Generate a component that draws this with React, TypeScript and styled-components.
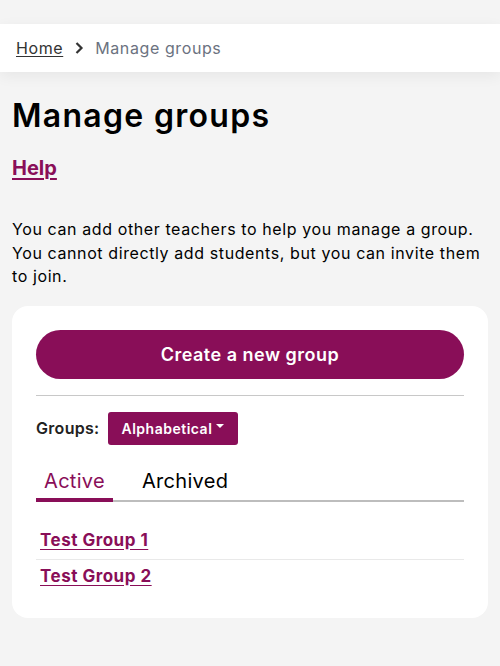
import React from "react";
import styled, { createGlobalStyle } from "styled-components";

const purple = "#890e58";

const Global = createGlobalStyle`
  html, body { margin: 0; padding: 0; background: #f4f4f4; }
  body { font-family: Inter, "Open Sans", sans-serif; color: #000; }
  * { box-sizing: border-box; }
`;

const Page = styled.div`
  padding-top: 24px;
  min-height: 666px;
`;

const Breadcrumb = styled.nav`
  height: 48px;
  background: #fff;
  box-shadow: 0 4px 14px rgba(0, 0, 0, 0.06);
  display: flex;
  align-items: center;
  gap: 10px;
  padding: 0 16px;
  font-size: 16px;
  letter-spacing: 0.6px;
`;

const CrumbLink = styled.a`
  color: #333;
  text-decoration: underline;
  text-underline-offset: 2px;
`;

const CrumbCurrent = styled.span`
  color: #6b7280;
`;

const Main = styled.main`
  padding: 0 12px;
`;

const Title = styled.h1`
  margin: 24px 0 0;
  font-size: 32px;
  font-weight: 600;
  letter-spacing: 1.3px;
  line-height: 40px;
`;

const HelpLink = styled.a`
  display: inline-block;
  margin-top: 16px;
  font-size: 20px;
  font-weight: 700;
  color: ${purple};
  text-decoration: underline;
  text-underline-offset: 3px;
  line-height: 32px;
`;

const Intro = styled.p`
  margin: 34px 0 0;
  font-size: 16px;
  line-height: 23.5px;
  letter-spacing: 0.6px;
`;

const Card = styled.section`
  margin-top: 17px;
  background: #fff;
  border-radius: 16px;
  padding: 24px 24px 23px;
`;

const PrimaryButton = styled.button`
  width: 100%;
  height: 49px;
  border: none;
  border-radius: 25px;
  background: ${purple};
  color: #fff;
  font: inherit;
  font-size: 18px;
  font-weight: 600;
  letter-spacing: 0.5px;
  cursor: pointer;
`;

const Rule = styled.hr`
  border: none;
  border-top: 1px solid #c8c8c8;
  margin: 16px 0 16px;
`;

const SortRow = styled.div`
  display: flex;
  align-items: center;
  gap: 8px;
`;

const SortLabel = styled.span`
  font-size: 16px;
  font-weight: 600;
  letter-spacing: 0.3px;
  color: #222;
`;

const Dropdown = styled.button`
  height: 33px;
  padding: 0 14px;
  border: none;
  border-radius: 3px;
  background: ${purple};
  color: #fff;
  font: inherit;
  font-size: 14px;
  font-weight: 600;
  letter-spacing: 0.5px;
  display: flex;
  align-items: center;
  gap: 4px;
`;

const Caret = styled.span`
  width: 0;
  height: 0;
  border-left: 4px solid transparent;
  border-right: 4px solid transparent;
  border-top: 4px solid #fff;
  margin-top: -4px;
`;

const Tabs = styled.div`
  display: flex;
  margin-top: 23px;
  border-bottom: 2px solid #bdbdbd;
`;

const Tab = styled.button<{ $active?: boolean }>`
  border: none;
  background: none;
  font: inherit;
  font-size: 20px;
  letter-spacing: 0.3px;
  padding: 0 8px 4px;
  width: ${(p) => (p.$active ? "77px" : "auto")};
  margin-left: ${(p) => (p.$active ? "0" : "21px")};
  margin-bottom: -2px;
  color: ${(p) => (p.$active ? purple : "#000")};
  border-bottom: 4px solid ${(p) => (p.$active ? purple : "transparent")};
  line-height: 26px;
`;

const GroupList = styled.ul`
  list-style: none;
  margin: 22px 0 0;
  padding: 0;
`;

const GroupItem = styled.li`
  padding: 4px 4px 6px;
  & + & {
    border-top: 1px solid #e9e9e9;
  }
`;

const GroupLink = styled.a`
  font-size: 17px;
  font-weight: 700;
  letter-spacing: 0.5px;
  color: ${purple};
  text-decoration: underline;
  text-underline-offset: 3px;
  line-height: 25px;
`;

const Chevron = () => (
  <svg width="12" height="14" viewBox="0 0 12 14" aria-hidden>
    <path d="M3.5 2 L8.5 7 L3.5 12" fill="none" stroke="#333" strokeWidth="2.2" />
  </svg>
);

export default function App() {
  return (
    <>
      <Global />
      <Page>
        <Breadcrumb>
          <CrumbLink href="#">Home</CrumbLink>
          <Chevron />
          <CrumbCurrent>Manage groups</CrumbCurrent>
        </Breadcrumb>
        <Main>
          <Title>Manage groups</Title>
          <HelpLink href="#">Help</HelpLink>
          <Intro>
            You can add other teachers to help you manage a group. You cannot directly add students, but you can
            invite them to join.
          </Intro>
          <Card>
            <PrimaryButton>Create a new group</PrimaryButton>
            <Rule />
            <SortRow>
              <SortLabel>Groups:</SortLabel>
              <Dropdown>
                Alphabetical
                <Caret />
              </Dropdown>
            </SortRow>
            <Tabs>
              <Tab $active>Active</Tab>
              <Tab>Archived</Tab>
            </Tabs>
            <GroupList>
              <GroupItem>
                <GroupLink href="#">Test Group 1</GroupLink>
              </GroupItem>
              <GroupItem>
                <GroupLink href="#">Test Group 2</GroupLink>
              </GroupItem>
            </GroupList>
          </Card>
        </Main>
      </Page>
    </>
  );
}
